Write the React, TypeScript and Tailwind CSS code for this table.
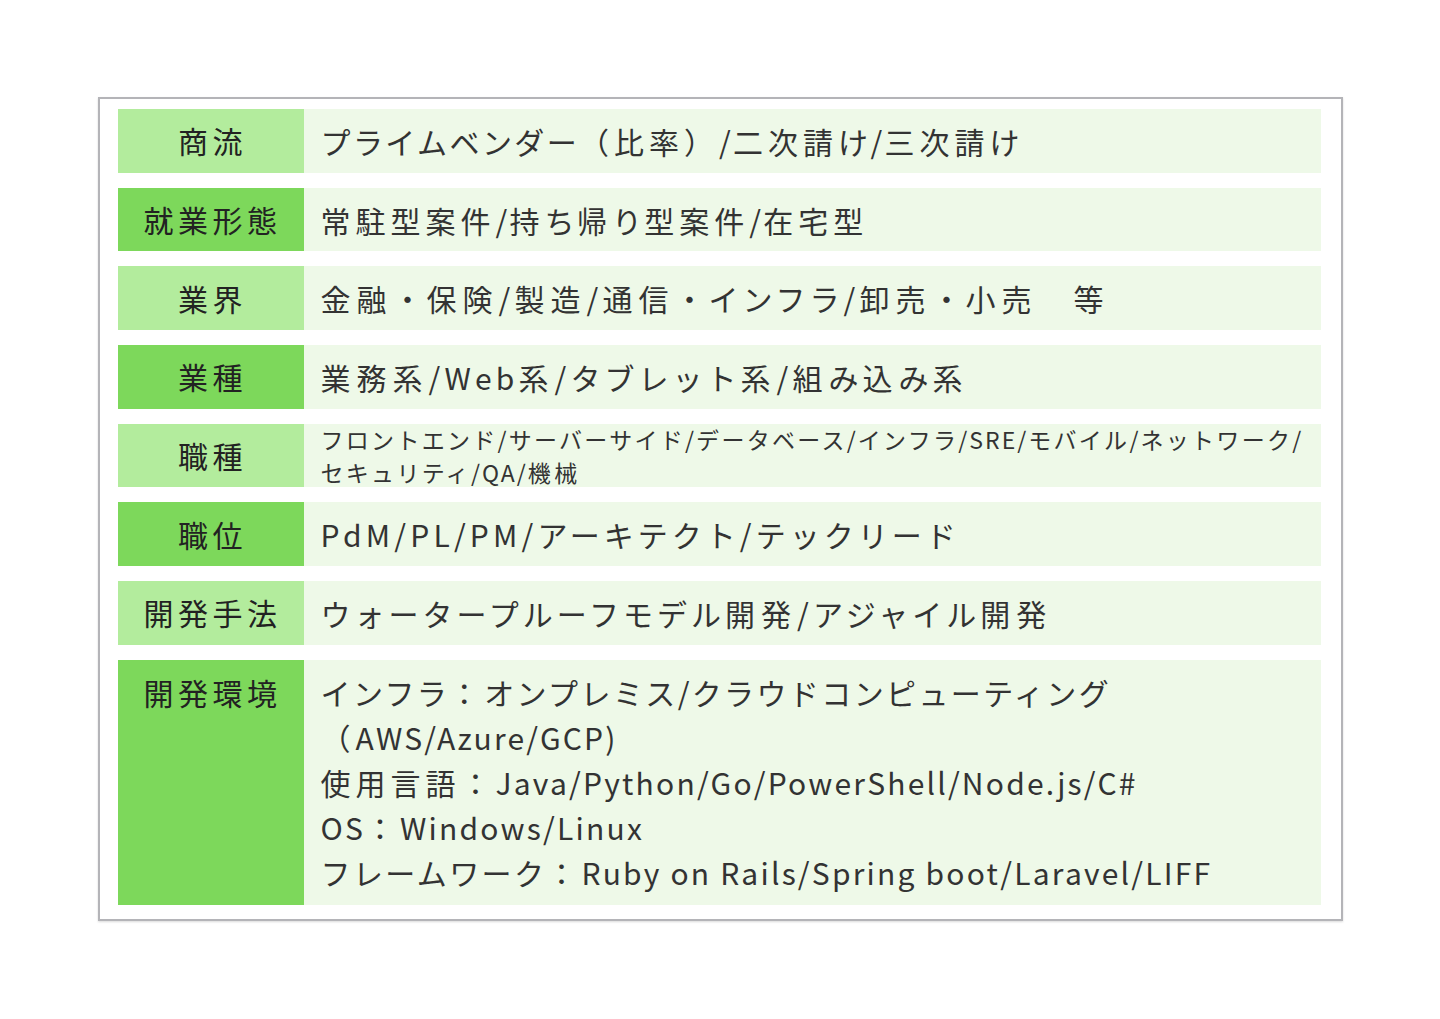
type Size = "big" | "wide" | "small";

const rows: { label: string; shade: "light" | "dark"; lines: string[]; size: Size }[] = [
  { label: "商流", shade: "light", size: "big", lines: ["プライムベンダー（比率）/二次請け/三次請け"] },
  { label: "就業形態", shade: "dark", size: "big", lines: ["常駐型案件/持ち帰り型案件/在宅型"] },
  { label: "業界", shade: "light", size: "wide", lines: ["金融・保険/製造/通信・インフラ/卸売・小売　等"] },
  { label: "業種", shade: "dark", size: "wide", lines: ["業務系/Web系/タブレット系/組み込み系"] },
  {
    label: "職種",
    shade: "light",
    size: "small",
    lines: ["フロントエンド/サーバーサイド/データベース/インフラ/SRE/モバイル/ネットワーク/", "セキュリティ/QA/機械"],
  },
  { label: "職位", shade: "dark", size: "wide", lines: ["PdM/PL/PM/アーキテクト/テックリード"] },
  { label: "開発手法", shade: "light", size: "wide", lines: ["ウォータープルーフモデル開発/アジャイル開発"] },
];

const envLines = [
  "インフラ：オンプレミス/クラウドコンピューティング",
  "（AWS/Azure/GCP)",
  "使用言語：Java/Python/Go/PowerShell/Node.js/C#",
  "OS：Windows/Linux",
  "フレームワーク：Ruby on Rails/Spring boot/Laravel/LIFF",
];

const spacing = {
  big: { kanji: "tracking-[5px]", kana: "tracking-[2.4px]", latin: "tracking-[2.2px]" },
  wide: { kanji: "tracking-[6px]", kana: "tracking-[4px]", latin: "tracking-[4.2px]" },
  small: { kanji: "tracking-[3.5px]", kana: "tracking-[2.3px]", latin: "tracking-[2px]" },
};

function kind(ch: string): "latin" | "kana" | "kanji" {
  if (/[\x00-\x7f]/.test(ch)) return "latin";
  if (/[\u3040-\u30ff]/.test(ch)) return "kana";
  return "kanji";
}

function Text({ text, size }: { text: string; size: Size }) {
  const runs: { k: "latin" | "kana" | "kanji"; s: string }[] = [];
  for (const ch of text) {
    const k = kind(ch);
    const last = runs[runs.length - 1];
    if (last && last.k === k) last.s += ch;
    else runs.push({ k, s: ch });
  }
  return (
    <>
      {runs.map((r, i) => (
        <span key={i} className={spacing[size][r.k]}>
          {r.s}
        </span>
      ))}
    </>
  );
}

export default function App() {
  return (
    <div className="min-h-[1019px] bg-white pt-[97px] font-['Noto_Sans_CJK_JP','Noto_Sans',sans-serif] text-[#333]">
      <div className="mx-auto flex w-[1245px] flex-col gap-[15px] border-2 border-[#b4b4b8] pb-[14px] pl-[18px] pr-[20px] pt-[10px] shadow-[0_1px_2px_rgba(0,0,0,0.15)]">
        {rows.map((r) => (
          <div key={r.label} className="flex h-[63.7px]">
            <div
              className={
                "flex w-[186px] shrink-0 items-center justify-center pl-[4px] text-[30px] tracking-[4.5px] text-[#222] " +
                (r.shade === "light" ? "bg-[#b3ec9d]" : "bg-[#7dd85b]")
              }
            >
              {r.label}
            </div>
            <div className="flex flex-1 flex-col justify-center whitespace-nowrap bg-[#eef9e8] pl-[17px]">
              {r.lines.map((l) => (
                <div key={l} className={r.size === "small" ? "text-[23px] leading-[33px]" : "text-[30px] leading-[40px]"}>
                  <Text text={l} size={r.size} />
                </div>
              ))}
            </div>
          </div>
        ))}
        <div className="flex h-[245px]">
          <div className="flex w-[186px] shrink-0 justify-center bg-[#7dd85b] pl-[4px] pt-[12px] text-[30px] leading-[40px] tracking-[4.5px] text-[#222]">
            開発環境
          </div>
          <div className="flex flex-1 flex-col whitespace-nowrap bg-[#eef9e8] pl-[17px] pt-[10px]">
            {envLines.map((l) => (
              <div key={l} className="text-[30px] leading-[45px]">
                <Text text={l} size="big" />
              </div>
            ))}
          </div>
        </div>
      </div>
    </div>
  );
}
